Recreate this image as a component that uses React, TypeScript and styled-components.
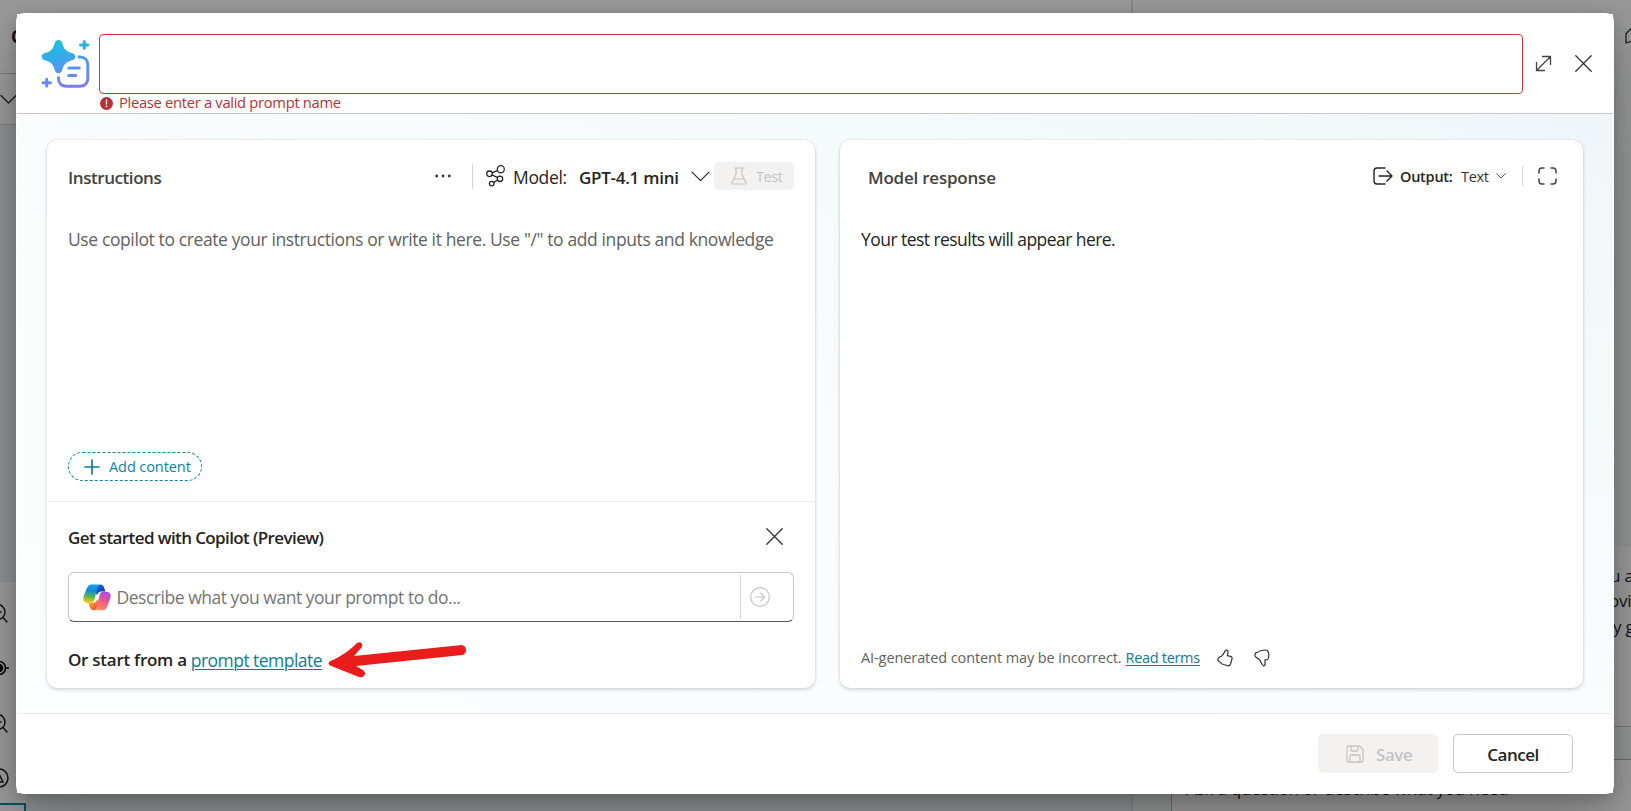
import React from "react";
import styled, { createGlobalStyle, css } from "styled-components";

const Global = createGlobalStyle`
  *, *::before, *::after { box-sizing: border-box; }
  html, body { margin: 0; padding: 0; }
  body {
    width: 1631px; height: 811px; overflow: hidden;
    font-family: "Open Sans", "Noto Sans", sans-serif;
    color: #242424; background: #fff;
  }
  button { font-family: inherit; margin: 0; padding: 0; }
  svg { display: block; flex: none; }
`;

const Screen = styled.div`
  position: relative;
  width: 1631px;
  height: 811px;
  overflow: hidden;
  display: flex;
  justify-content: center;
  padding: 13px 17px 17px 16px;
`;

/* Page behind the dialog */
const Behind = styled.div`
  position: absolute;
  inset: 0;
  display: flex;
  background: #fff;
`;
const Canvas = styled.div`
  width: 1133px;
  display: flex;
  flex-direction: column;
  border-right: 2px solid #e0e0e0;
`;
const TopStrip = styled.div`
  height: 74px;
  border-bottom: 1px solid #d0d0d0;
`;
const ToolStrip = styled.div`
  height: 51px;
  border-bottom: 1px solid #d0d0d0;
`;
const Grid = styled.div`
  flex: 1;
  background: #eef1f2;
`;
const Chat = styled.div`
  flex: 1;
  display: flex;
  flex-direction: column;
`;
const ChatBody = styled.div`
  flex: 1;
  background: linear-gradient(180deg, #fdfdfd 0, #f4f7f6 200px);
`;
const Floating = styled.div<{ $x: number; $y: number }>`
  position: absolute;
  left: ${(p) => p.$x}px;
  top: ${(p) => p.$y}px;
`;
const ZoomBar = styled(Floating)`
  width: 26px;
  height: 229px;
  background: #fff;
`;
const Selected = styled(Floating)`
  width: 26px;
  height: 20px;
  border: 2px solid #0d87a8;
  border-left: 0;
`;
const Bubble = styled(Floating)`
  width: 40px;
  height: 180px;
  background: #fff;
  border-bottom: 1px solid #c8c8c8;
`;
const Composer = styled(Floating)`
  width: 470px;
  height: 60px;
  background: #fff;
  border: 1px solid #b5b5b5;
  padding: 16px 14px;
`;
const Back = styled.span<{ $w?: number }>`
  font-size: 17px;
  letter-spacing: -0.2px;
  line-height: 26px;
  white-space: nowrap;
  font-weight: ${(p) => p.$w || 400};
`;
const Overlay = styled.div`
  position: absolute;
  inset: 0;
  background: rgba(0, 0, 0, 0.4);
`;

/* Dialog */
const Dialog = styled.div`
  position: relative;
  width: 1598px;
  height: 781px;
  padding: 1px;
  background: #fff;
  border-radius: 8px;
  display: flex;
  flex-direction: column;
  box-shadow: 0 25.6px 57.6px rgba(0, 0, 0, 0.22), 0 4.8px 14.4px rgba(0, 0, 0, 0.18);
`;
const Header = styled.header`
  height: 100px;
  flex: none;
  display: flex;
  background: #fff;
  border-bottom: 1px solid #c8c6c4;
  padding: 20px 21px 0 23px;
`;
const LogoBox = styled.div`
  width: 59px;
  padding-top: 4px;
`;
const NameField = styled.div`
  width: 1424px;
`;
const NameInput = styled.input`
  display: block;
  width: 100%;
  height: 60px;
  border: 1px solid #d13438;
  border-radius: 4px;
  outline: none;
  background: #fff;
`;
const ErrorLine = styled.div`
  display: flex;
  align-items: center;
  gap: 6px;
  height: 18px;
  padding-left: 1px;
`;
const HeaderActions = styled.div`
  flex: 1;
  display: flex;
  justify-content: space-between;
  height: 59px;
  align-items: center;
  padding-left: 12px;
`;

type TextProps = { $size?: number; $ls?: number; $color?: string; $weight?: number; $dy?: number };
const Text = styled.span<TextProps>`
  font-size: ${(p) => p.$size || 17.5}px;
  letter-spacing: ${(p) => p.$ls || 0}px;
  color: ${(p) => p.$color || "#242424"};
  font-weight: ${(p) => p.$weight || 400};
  line-height: 24px;
  white-space: nowrap;
  ${(p) => p.$dy && css`margin-top: ${p.$dy}px;`}
`;
const Link = styled(Text).attrs({ as: "a" })`
  color: #0f7b93;
  text-decoration: underline;
  text-decoration-thickness: 1px;
  text-underline-offset: 2px;
`;

const Body = styled.main`
  flex: 1;
  display: flex;
  gap: 25px;
  padding: 26px 30px 25px;
  background: linear-gradient(200deg, #f0f5f9 0%, #f5fafb 25%, #fafcfe 52%, #fcfdff 100%);
`;
const Card = styled.section<{ $w: number }>`
  width: ${(p) => p.$w}px;
  background: #fff;
  border-radius: 10px;
  display: flex;
  flex-direction: column;
  box-shadow: 0 0 2px rgba(0, 0, 0, 0.14), 0 2px 4px rgba(0, 0, 0, 0.14);
`;
const CardHeader = styled.div<{ $left: number; $right: number }>`
  display: flex;
  align-items: center;
  height: 74px;
  flex: none;
  padding: 0 ${(p) => p.$right}px 2px ${(p) => p.$left}px;
`;
const Spacer = styled.div`
  flex: 1;
`;
const Rule = styled.div<{ $h: number; $m: string }>`
  width: 1px;
  height: ${(p) => p.$h}px;
  margin: ${(p) => p.$m};
  background: #d6d6d6;
`;
const Slot = styled.div<{ $w: number }>`
  width: ${(p) => p.$w}px;
  display: flex;
  align-items: center;
  flex: none;
`;
const DisabledButton = styled.button<{ $w: number; $h: number; $gap: number; $left: number }>`
  width: ${(p) => p.$w}px;
  height: ${(p) => p.$h}px;
  display: flex;
  align-items: center;
  gap: ${(p) => p.$gap}px;
  padding-left: ${(p) => p.$left}px;
  border: 0;
  border-radius: 5px;
  background: #f3f2f1;
`;
const CancelButton = styled.button`
  width: 120px;
  height: 39px;
  border: 1px solid #c8c8c8;
  border-radius: 5px;
  background: #fff;
  display: flex;
  align-items: center;
  justify-content: center;
`;
const Prompt = styled.div<{ $left: number }>`
  flex: 1;
  display: flex;
  flex-direction: column;
  align-items: flex-start;
  justify-content: space-between;
  padding: 13px 0 20px ${(p) => p.$left}px;
`;
const AddContent = styled.button`
  width: 134px;
  height: 29px;
  border: 1px dashed #0b84a5;
  border-radius: 15px;
  background: #fff;
  display: flex;
  align-items: center;
  gap: 9px;
  padding-left: 15px;
`;
const Starter = styled.div`
  height: 187px;
  flex: none;
  margin: 0 1px;
  padding: 0 20px;
  border-top: 1px solid #edebe9;
`;
const StarterTitle = styled.div`
  display: flex;
  justify-content: space-between;
  align-items: center;
  height: 70px;
  padding: 0 11px 1px 0;
`;
const CopilotInput = styled.div`
  display: flex;
  align-items: center;
  height: 50px;
  border: 1px solid #c8c8c8;
  border-bottom-color: #575757;
  border-radius: 6px;
  padding-left: 14px;
`;
const TemplateLine = styled.div`
  display: flex;
  align-items: center;
  gap: 4px;
  height: 76px;
`;
const ResponseFoot = styled.div`
  display: flex;
  align-items: center;
  height: 61px;
  padding-left: 21px;
  flex: none;
`;
const Footer = styled.footer`
  height: 80px;
  flex: none;
  border-top: 1px solid #edebe9;
  background: #fff;
  display: flex;
  justify-content: flex-end;
  gap: 15px;
  padding: 20px 40px 0 0;
`;
const RedArrow = styled.svg`
  position: absolute;
  left: 310px;
  top: 625px;
`;

const Line = ({ w, h, d, color = "#242424", sw = 1.2 }: { w: number; h: number; d: string; color?: string; sw?: number }) => (
  <svg width={w} height={h} viewBox={`0 0 ${w} ${h}`} fill="none" stroke={color} strokeWidth={sw} strokeLinecap="round" strokeLinejoin="round">
    <path d={d} />
  </svg>
);

const PromptLogo = () => (
  <svg width="50" height="50" viewBox="0 0 50 50" fill="none">
    <defs>
      <linearGradient id="pl" x1="20" y1="0" x2="34" y2="50" gradientUnits="userSpaceOnUse">
        <stop offset="0" stopColor="#10c6dc" />
        <stop offset="0.5" stopColor="#4a9df0" />
        <stop offset="1" stopColor="#8378f0" />
      </linearGradient>
    </defs>
    <path d="M18.500 2C20.500 2 21.800 3.400 22.300 5.200C24 11.500 26 13.300 32 15C34 15.600 35.300 16.900 35.300 18.700C35.300 20.500 34 21.600 32 22.200C26 24 24 26 22.300 31.800C21.800 33.800 20.500 35.200 18.500 35.200C16.500 35.200 15.200 33.800 14.700 31.800C13 26 11 24 5 22.200C3 21.600 1.700 20.500 1.700 18.700C1.700 16.900 3 15.600 5 15C11 13.300 13 11.500 14.700 5.200C15.200 3.400 16.500 2 18.500 2Z" fill="url(#pl)" />
    <g stroke="url(#pl)" strokeLinecap="round">
      <path d="M44.300 3.500v6.800M40.500 6.900h7.400M6.700 41.300v6.800M3 44.700h7.400" strokeWidth="3" />
      <path d="M28.700 29.900h10.600M28.700 37.500h7" strokeWidth="3" />
      <path d="M37.800 19H40c5 0 7.800 3.200 7.800 7.800V40.200c0 5-3.200 8-7.800 8H26.500c-4.800 0-8-3-8-8v-1.800" strokeWidth="3" strokeLinecap="butt" />
    </g>
  </svg>
);

const CopilotLogo = () => (
  <svg width="28" height="27" viewBox="0 0 28 27">
    <defs>
      <linearGradient id="cA" x1="8" y1="0" x2="6" y2="19" gradientUnits="userSpaceOnUse">
        <stop offset="0.1" stopColor="#0f9bec" />
        <stop offset="0.35" stopColor="#128ed2" />
        <stop offset="0.65" stopColor="#4fb35c" />
        <stop offset="0.95" stopColor="#f2cb08" />
      </linearGradient>
      <linearGradient id="cB" x1="22" y1="7" x2="15" y2="27" gradientUnits="userSpaceOnUse">
        <stop offset="0" stopColor="#a44cf0" />
        <stop offset="0.4" stopColor="#e3559c" />
        <stop offset="0.8" stopColor="#ff7a66" />
        <stop offset="1" stopColor="#ffa45c" />
      </linearGradient>
      <linearGradient id="cC" x1="14" y1="1" x2="22" y2="8" gradientUnits="userSpaceOnUse">
        <stop offset="0" stopColor="#1467d8" />
        <stop offset="1" stopColor="#1b39b0" />
      </linearGradient>
      <linearGradient id="cD" x1="6" y1="18" x2="13" y2="26" gradientUnits="userSpaceOnUse">
        <stop offset="0" stopColor="#ffb52e" />
        <stop offset="1" stopColor="#e8463a" />
      </linearGradient>
    </defs>
    <path d="M17 .5C19.500 .5 20.700 2 21.300 4L22.400 7.600H18.800C16 7.600 14.800 9 14 11.500L11 4Z" fill="url(#cC)" />
    <path d="M11 26.200C8.500 26.200 7.300 25 6.700 23L5.500 19H9.200C12 19 13.200 17.500 14 15L17 23Z" fill="url(#cD)" />
    <path d="M17.200 .5H8.600C5.800 .5 4.300 2.500 3.300 5.500C2.200 8.800 .3 12 .3 15C.3 17.700 2.200 19 4.700 19H7.500C10 19 10.900 17.500 11.600 15C12.500 11.600 13.200 8 14.200 4.800C14.900 2.500 15.500 .5 17.200 .5Z" fill="url(#cA)" />
    <path d="M10.800 26.200H19.400C22.200 26.200 23.700 24.200 24.700 21.200C25.800 17.900 27.700 14.700 27.700 11.700C27.700 9 25.800 7.700 23.300 7.700H20.500C18 7.700 17.100 9.200 16.400 11.700C15.500 15.100 14.800 18.700 13.800 21.900C13.100 24.200 12.500 26.200 10.800 26.200Z" fill="url(#cB)" />
  </svg>
);

const ModelIcon = () => (
  <svg width="20" height="22" viewBox="0 0 20 22" fill="none" stroke="#242424" strokeWidth="1.300">
    <circle cx="3.500" cy="8.800" r="2.800" />
    <circle cx="14.800" cy="4.200" r="3.500" />
    <circle cx="14" cy="13.800" r="2.700" />
    <circle cx="5.700" cy="18.600" r="2.300" />
    <path d="M6.200 7.700l5.400-2.100M6.100 9.900l5.400 2.800M11.600 15l-3.900 2.400" />
  </svg>
);

const App = () => (
  <>
    <Global />
    <Screen>
      <Behind aria-hidden="true">
        <Canvas>
          <TopStrip />
          <ToolStrip />
          <Grid />
        </Canvas>
        <Chat>
          <ChatBody />
        </Chat>
        <Floating $x={11} $y={24}><Back $w={700}>C</Back></Floating>
        <Floating $x={0} $y={94}><Line w={17} h={11} d="M1 1.500L8.500 9L16 1.500" /></Floating>
        <ZoomBar $x={0} $y={582} />
        <Floating $x={-12} $y={603}><Line w={20} h={20} sw={1.500} d="M17 9A7.500 7.500 0 1 1 2 9A7.500 7.500 0 1 1 17 9M15 14.500L19 19M6 9H13" /></Floating>
        <Floating $x={-11} $y={658}>
          <svg width="20" height="20" viewBox="0 0 20 20" fill="none" stroke="#000" strokeWidth="1.500">
            <circle cx="10" cy="10" r="6.500" /><circle cx="10" cy="10" r="3.500" fill="#000" /><path d="M16.500 10H20" />
          </svg>
        </Floating>
        <Floating $x={-12} $y={713}><Line w={20} h={20} sw={1.500} d="M17 9A7.500 7.500 0 1 1 2 9A7.500 7.500 0 1 1 17 9M15 14.500L19 19M6 9H13" /></Floating>
        <Floating $x={-11} $y={768}><Line w={20} h={20} sw={1.500} d="M19 10A9 9 0 1 1 1 10A9 9 0 1 1 19 10M10 6L14 14H10" /></Floating>
        <Selected $x={0} $y={803} />
        <Floating $x={1625} $y={27}><Line w={18} h={18} d="M1 6.500L7 1V14L1 16Z" /></Floating>
        <Bubble $x={1591} $y={547} />
        <Floating $x={1610} $y={563}><Back>u a</Back></Floating>
        <Floating $x={1609} $y={588}><Back>ovi</Back></Floating>
        <Floating $x={1613} $y={614}><Back>y g</Back></Floating>
        <Composer $x={1171} $y={759}><Back>Ask a question or describe what you need</Back></Composer>
      </Behind>
      <Overlay />
      <Dialog role="dialog">
        <Header>
          <LogoBox><PromptLogo /></LogoBox>
          <NameField>
            <NameInput aria-label="Prompt name" />
            <ErrorLine>
              <svg width="13" height="13" viewBox="0 0 13 13">
                <circle cx="6.500" cy="6.500" r="6.500" fill="#bc2f32" />
                <path d="M6.500 3v4" stroke="#fff" strokeWidth="1.300" strokeLinecap="round" />
                <circle cx="6.500" cy="9.300" r="0.900" fill="#fff" />
              </svg>
              <Text $size={14.75} $ls={-0.31} $dy={-2} $color="#bc2f32">Please enter a valid prompt name</Text>
            </ErrorLine>
          </NameField>
          <HeaderActions>
            <Line w={17} h={17} sw={1.300} color="#424242" d="M1.500 15.500L15.500 1.500M7.500 1.500H15.500V9.500M1.500 7.500V15.500H9.500" />
            <Line w={17} h={17} sw={1.300} color="#333" d="M.8 .8L16.200 16.200M16.200 .8L.8 16.200" />
          </HeaderActions>
        </Header>
        <Body>
          <Card $w={768}>
            <CardHeader $left={21} $right={21}>
              <Text $size={17} $ls={-0.43} $dy={3} $weight={600} $color="#424242">Instructions</Text>
              <Spacer />
              <svg width="16" height="4" viewBox="0 0 16 4" fill="#333">
                <circle cx="1.700" cy="2" r="1.400" /><circle cx="8" cy="2" r="1.400" /><circle cx="14.300" cy="2" r="1.400" />
              </svg>
              <Rule $h={25} $m="0 13px 0 21px" />
              <Slot $w={27}><ModelIcon /></Slot>
              <Slot $w={66}><Text $ls={-0.35} $dy={2}>Model:</Text></Slot>
              <Slot $w={112}><Text $size={17} $ls={-0.27} $dy={3} $weight={600}>GPT-4.1 mini</Text></Slot>
              <Slot $w={23}><Line w={19} h={11} d="M1 1.200L9.500 9.700L18 1.200" /></Slot>
              <DisabledButton $w={80} $h={28} $gap={9} $left={17}>
                <Line w={16} h={18} color="#c4c4c4" d="M3 1H13M5 1V7.500L1 15.500Q.5 17 2 17H14Q15.500 17 15 15.500L11 7.500V1M3.300 12H12.700" />
                <Text $size={14.500} $ls={-0.45} $dy={1} $color="#c4c4c4">Test</Text>
              </DisabledButton>
            </CardHeader>
            <Prompt $left={21}>
              <Text $ls={-0.39} $color="#616161">Use copilot to create your instructions or write it here. Use "/" to add inputs and knowledge</Text>
              <AddContent>
                <Line w={16} h={16} sw={1.700} color="#0b7f9f" d="M8 1V15M1 8H15" />
                <Text $size={14.500} $ls={-0.08} $color="#0b84a5">Add content</Text>
              </AddContent>
            </Prompt>
            <Starter>
              <StarterTitle>
                <Text $size={17} $ls={-0.61} $dy={2} $weight={600}>Get started with Copilot (Preview)</Text>
                <Line w={17} h={17} sw={1.300} color="#333" d="M.8 .8L16.200 16.200M16.200 .8L.8 16.200" />
              </StarterTitle>
              <CopilotInput>
                <Slot $w={33.5}><CopilotLogo /></Slot>
                <Text $ls={-0.47} $color="#757575">Describe what you want your prompt to do...</Text>
                <Spacer />
                <Rule $h={44} $m="0 9px 0 0" />
                <Slot $w={43}><Line w={20} h={20} color="#c4c4c4" d="M19.300 10A9.300 9.300 0 1 1 .7 10A9.300 9.300 0 1 1 19.300 10M5.500 10H14.500M10.800 6.200L14.600 10L10.800 13.800" /></Slot>
              </CopilotInput>
              <TemplateLine>
                <Text $size={17} $ls={-0.27} $weight={600}>Or start from a</Text>
                <Link href="#" $ls={-0.54}>prompt template</Link>
              </TemplateLine>
            </Starter>
          </Card>
          <Card $w={743}>
            <CardHeader $left={28} $right={26}>
              <Text $size={17} $ls={-0.22} $dy={3} $weight={600} $color="#424242">Model response</Text>
              <Spacer />
              <Slot $w={27}><Line w={20} h={18} sw={1.400} d="M12 1H4Q1 1 1 4V14Q1 17 4 17H12M6 9H19M14 4L19 9L14 14" /></Slot>
              <Slot $w={61}><Text $size={14.500} $ls={-0.25} $dy={2} $weight={600}>Output:</Text></Slot>
              <Slot $w={35}><Text $size={14.500} $ls={-0.3} $dy={2} $color="#333">Text</Text></Slot>
              <Line w={10} h={6} sw={1} color="#555" d="M.7 .7L5 5L9.300 .7" />
              <Rule $h={20} $m="0 15px 0 16px" />
              <Line w={19} h={18} sw={1.500} color="#424242" d="M1 6V4Q1 1 4 1H6M13 1H15Q18 1 18 4V6M18 12V14Q18 17 15 17H13M6 17H4Q1 17 1 14V12" />
            </CardHeader>
            <Prompt $left={21}><Text $ls={-0.55}>Your test results will appear here.</Text></Prompt>
            <ResponseFoot>
              <Slot $w={264.5}><Text $size={14.500} $ls={-0.09} $color="#616161">AI-generated content may be incorrect.</Text></Slot>
              <Slot $w={91.5}><Link href="#" $size={14.500} $ls={-0.3}>Read terms</Link></Slot>
              <Slot $w={37}><Line w={16} h={18} color="#333" d="M9.200 1Q11.300 .8 11 3.500L10.300 6.600L13.500 7.300Q15.500 7.800 15 10L13.500 15Q12.800 17.300 10.500 16.800L4.500 14.800L3.500 13.200L1.500 12.300Q.3 11 1.300 9.200Q2.500 7.800 4.300 7.400Q7 5 8 2Z" /></Slot>
              <Line w={16} h={18} color="#333" d="M9.500 17Q11.400 16.600 11 14V10.800Q13.500 11 14.300 9.700Q15.300 6 14.300 3Q13.500 .8 11 1L5.500 2Q4.500 3.300 2 3.700Q.6 5 1 7Q2 8.800 4 9.300Q6.500 11.500 8 15Z" />
            </ResponseFoot>
          </Card>
        </Body>
        <Footer>
          <DisabledButton $w={120} $h={39} $gap={12} $left={28}>
            <Line w={18} h={18} sw={1.300} color="#c4c4c4" d="M3 1H13.500L17 4.500V15Q17 17 15 17H3Q1 17 1 15V3Q1 1 3 1M5 1V5Q5 6 6 6H11Q12 6 12 5V1M4 17V11.500Q4 10 5.500 10H12.500Q14 10 14 11.500V17" />
            <Text $size={17} $ls={-0.45} $dy={2} $weight={600} $color="#c4c4c4">Save</Text>
          </DisabledButton>
          <CancelButton><Text $size={17} $ls={-0.5} $dy={2} $weight={600}>Cancel</Text></CancelButton>
        </Footer>
        <RedArrow width="145" height="45" viewBox="0 0 145 45">
          <path d="M3.500 23.500C12 20 22 14 31 5Q34 3.500 35.800 5.500Q37 8 35.500 9.500L28 18L136 7Q140 8 140 12Q140 16 136.500 17L30 28L37.500 32.500Q39.800 34.500 38.700 37Q36.500 40.500 33 39L4 27.500Q1.500 25.500 3.500 23.500Z" fill="#ea1d1d" />
        </RedArrow>
      </Dialog>
    </Screen>
  </>
);

export default App;
